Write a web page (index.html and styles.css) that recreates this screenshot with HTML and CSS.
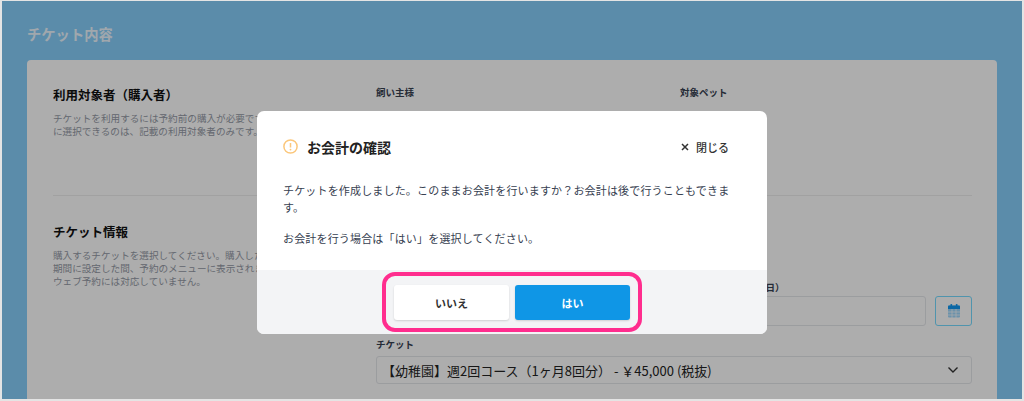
FILE: index.html
```html
<!DOCTYPE html>
<html lang="ja">
<head>
  <meta charset="UTF-8">
  <title>チケット内容</title>
  <link rel="stylesheet" href="styles.css">
</head>
<body>
  <div class="frame">
    <h1 class="page-title">チケット内容</h1>

    <div class="card">
      <section class="row row-target">
        <div class="intro">
          <h2>利用対象者（購入者）</h2>
          <p>チケットを利用するには予約前の購入が必要です。予約時<br>に選択できるのは、記載の利用対象者のみです。</p>
        </div>
        <div class="fields-two">
          <div class="label">飼い主様</div>
          <div class="label">対象ペット</div>
        </div>
      </section>

      <section class="row row-info">
        <div class="intro">
          <h2>チケット情報</h2>
          <p>購入するチケットを選択してください。購入したチケットは<br>期間に設定した間、予約のメニューに表示されます。なお、<br>ウェブ予約には対応していません。</p>
        </div>
        <div class="fields">
          <div class="label label-date">利用開始日（未入力の場合にはチケットの購入日が利用開始日に設定されます／初期値は本日）</div>
          <div class="date-row">
            <div class="input"></div>
            <button class="cal-btn" type="button">
              <svg width="12" height="14" viewBox="0 0 12 14">
                <rect x="0" y="1.5" width="12" height="12" rx="1" fill="#a0d8fb"/>
                <path d="M0 5V2.5a1 1 0 0 1 1-1h10a1 1 0 0 1 1 1V5z" fill="#1099f3"/>
                <rect x="2.5" y="0" width="1.6" height="3" rx=".6" fill="#1099f3"/>
                <rect x="7.9" y="0" width="1.6" height="3" rx=".6" fill="#1099f3"/>
                <path d="M0 8h12M0 11h12M4 5v9M8 5v9" stroke="#fff" stroke-width=".7"/>
              </svg>
            </button>
          </div>
          <div class="label label-ticket">チケット</div>
          <div class="select">
            <span>【幼稚園】週2回コース（1ヶ月8回分） - ￥45,000 (税抜)</span>
            <svg width="12" height="8" viewBox="0 0 12 8">
              <path d="M1.5 1.5 6 6l4.5-4.5" fill="none" stroke="#333" stroke-width="1.4"/>
            </svg>
          </div>
        </div>
      </section>
    </div>
  </div>

  <div class="overlay">
    <div class="modal">
      <div class="modal-body">
        <div class="modal-head">
          <svg class="warn" width="15" height="15" viewBox="0 0 15 15">
            <circle cx="7.5" cy="7.5" r="6.6" fill="none" stroke="#fbc77c" stroke-width="1.5"/>
            <path d="M7.5 4v4.4" stroke="#fbc77c" stroke-width="1.5"/>
            <circle cx="7.5" cy="10.6" r=".9" fill="#fbc77c"/>
          </svg>
          <h3>お会計の確認</h3>
          <button class="close" type="button">
            <svg width="8" height="8" viewBox="0 0 8 8">
              <path d="M1 1l6 6M7 1 1 7" stroke="#333" stroke-width="1.5"/>
            </svg>
            閉じる
          </button>
        </div>
        <p>チケットを作成しました。このままお会計を行いますか？お会計は後で行うこともできます。</p>
        <p>お会計を行う場合は「はい」を選択してください。</p>
      </div>
      <div class="modal-foot">
        <button class="btn btn-no" type="button">いいえ</button>
        <button class="btn btn-yes" type="button">はい</button>
        <div class="highlight"></div>
      </div>
    </div>
  </div>
</body>
</html>
```

FILE: styles.css
```css
html, body {
  margin: 0;
  padding: 0;
  height: 100%;
  overflow: hidden;
  background-color: #e4e4e4;
  font-family: "Noto Sans CJK JP", "Noto Sans", sans-serif;
}
.frame {
  height: 398px;
  margin: 1px 2px 0 2px;
  padding: 0 25px;
  background-color: #86cefb;
  overflow: hidden;
}
.page-title {
  margin: 0;
  padding-top: 23px;
  height: 36px;
  font-size: 14.3px;
  line-height: 20px;
  font-weight: 700;
  color: #ecf7ff;
}
.card {
  height: 345px;
  padding: 0 25px 0 26px;
  background-color: #fff;
  border-radius: 4px;
}
.row {
  display: flex;
}
.row-target {
  height: 136px;
  padding-top: 25px;
  box-sizing: border-box;
  border-bottom: 1px solid #eeeeee;
}
.row-info {
  padding-top: 26px;
}
.intro {
  width: 323px;
  flex-shrink: 0;
}
.intro h2 {
  margin: 0 0 7px;
  font-size: 12.5px;
  line-height: 20px;
  font-weight: 700;
  color: #111;
}
.intro p {
  margin: 0;
  font-size: 9.6px;
  line-height: 13px;
  color: #949aa5;
  white-space: nowrap;
}
.fields-two {
  display: flex;
}
.fields-two .label {
  width: 304px;
}
.fields {
  flex: 1;
}
.label {
  font-size: 9.5px;
  line-height: 14px;
  font-weight: 700;
  color: #374151;
}
.label-date {
  margin-top: 59px;
  height: 15px;
  line-height: 12px;
  white-space: nowrap;
}
.label-ticket {
  margin-top: 11px;
  margin-bottom: 5px;
}
.date-row {
  display: flex;
  gap: 9px;
}
.input {
  flex: 1;
  height: 30px;
  box-sizing: border-box;
  border: 1px solid #e5e7eb;
  border-radius: 3px;
}
.cal-btn {
  width: 37px;
  height: 30px;
  padding: 0;
  display: flex;
  align-items: center;
  justify-content: center;
  background: none;
  border: 1px solid #76dbff;
  border-radius: 3px;
}
.select {
  height: 28px;
  padding: 0 12px 0 5px;
  box-sizing: border-box;
  display: flex;
  align-items: center;
  justify-content: space-between;
  border: 1px solid #e5e7eb;
  border-radius: 3px;
  font-size: 13px;
  color: #222;
}
.overlay {
  position: fixed;
  top: 1px;
  left: 2px;
  width: 1020px;
  height: 398px;
  display: flex;
  justify-content: center;
  background: rgba(0, 0, 0, 0.32);
}
.modal {
  width: 510px;
  height: 223px;
  margin-top: 110px;
  display: flex;
  flex-direction: column;
  background: #fff;
  border-radius: 7px;
  overflow: hidden;
}
.modal-body {
  height: 159px;
  padding: 0 38px 0 26px;
  box-sizing: border-box;
}
.modal-body p {
  margin: 0 -8px 15px 0;
  font-size: 11px;
  line-height: 16.5px;
  letter-spacing: 0.17px;
  color: #374151;
}
.modal-head {
  display: flex;
  align-items: center;
  height: 71px;
  box-sizing: border-box;
}
.warn {
  flex-shrink: 0;
  margin-right: 9px;
}
.modal-head h3 {
  margin: 0;
  flex: 1;
  font-size: 14px;
  line-height: 20px;
  font-weight: 700;
  color: #222;
}
.close {
  display: flex;
  align-items: center;
  gap: 7px;
  padding: 0;
  background: none;
  border: none;
  font-family: inherit;
  font-size: 11px;
  font-weight: 500;
  line-height: 16px;
  color: #333;
}
.modal-foot {
  position: relative;
  flex: 1;
  display: flex;
  justify-content: center;
  gap: 6px;
  padding-top: 15px;
  box-sizing: border-box;
  background: #f3f4f6;
}
.btn {
  width: 115px;
  height: 35px;
  border: none;
  border-radius: 3px;
  font-family: inherit;
  font-size: 11px;
  font-weight: 700;
  box-shadow: 0 1px 2px rgba(0, 0, 0, 0.15);
}
.btn-no {
  background: #fff;
  color: #333;
}
.btn-yes {
  background: #0f96e6;
  color: #fff;
}
.highlight {
  position: absolute;
  top: 2px;
  bottom: 2px;
  left: 125px;
  width: 260px;
  box-sizing: border-box;
  border: 4px solid #ff2d8e;
  border-radius: 13px;
}
```
